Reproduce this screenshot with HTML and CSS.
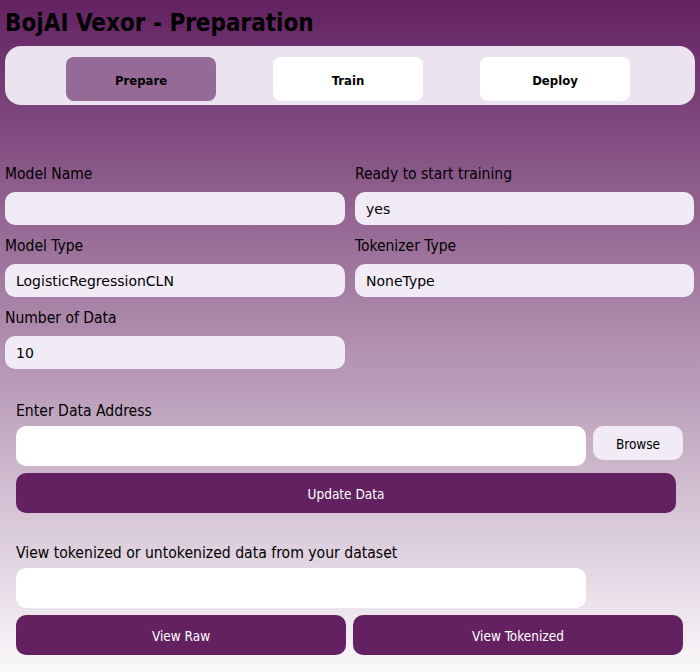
FILE: index.html
```html
<!DOCTYPE html>
<html>
<head>
<meta charset="utf-8">
<link rel="stylesheet" href="styles.css">
</head>
<body>
<div class="page">
  <h1 class="title">BojAI Vexor - Preparation</h1>
  <nav class="tabs">
    <div class="tab active">Prepare</div>
    <div class="tab">Train</div>
    <div class="tab">Deploy</div>
  </nav>
  <div class="info-grid">
    <div class="field">
      <div class="label">Model Name</div>
      <div class="value"></div>
    </div>
    <div class="field">
      <div class="label">Ready to start training</div>
      <div class="value">yes</div>
    </div>
    <div class="field">
      <div class="label">Model Type</div>
      <div class="value">LogisticRegressionCLN</div>
    </div>
    <div class="field">
      <div class="label">Tokenizer Type</div>
      <div class="value">NoneType</div>
    </div>
    <div class="field">
      <div class="label">Number of Data</div>
      <div class="value">10</div>
    </div>
  </div>
  <section class="data-section">
    <div class="section-label">Enter Data Address</div>
    <div class="row">
      <div class="text-input"></div>
      <div class="browse">Browse</div>
    </div>
    <div class="btn btn-update">Update Data</div>
  </section>
  <section class="view-section">
    <div class="section-label">View tokenized or untokenized data from your dataset</div>
    <div class="row">
      <div class="text-input"></div>
    </div>
    <div class="row">
      <div class="btn btn-half">View Raw</div>
      <div class="btn btn-half">View Tokenized</div>
    </div>
  </section>
</div>
</body>
</html>
```
FILE: styles.css
```css
* { box-sizing: border-box; }
html, body {
  margin: 0;
  padding: 0;
  height: 672px;
}
body {
  background: linear-gradient(to bottom, #632161 0px, #faf8fa 672px);
  font-family: "DejaVu Sans Condensed", "DejaVu Sans", sans-serif;
  color: #000;
}
.page {
  padding: 8px 5px 0 5px;
}
.title {
  margin: 0;
  font-size: 24px;
  line-height: 30px;
  font-weight: bold;
  font-family: "DejaVu Sans Condensed", "DejaVu Sans", sans-serif;
}
.tabs {
  margin-top: 8px;
  height: 59px;
  background: #ece3f0;
  border-radius: 16px;
  display: flex;
  justify-content: center;
  gap: 57px;
  padding-top: 11px;
  padding-right: 4px;
}
.tab {
  width: 150px;
  height: 44px;
  background: #ffffff;
  border-radius: 8px;
  display: flex;
  align-items: center;
  justify-content: center;
  font-weight: bold;
  font-size: 13px;
  padding-top: 3px;
}
.tab.active {
  background: #966a97;
}
.info-grid {
  margin-top: 58px;
  display: grid;
  grid-template-columns: 340px 339px;
  column-gap: 10px;
  row-gap: 10px;
}
.label {
  font-size: 15.5px;
  line-height: 20px;
  height: 20px;
  padding-top: 1px;
  margin-bottom: 9px;
}
.value {
  height: 33px;
  background: #f1ebf6;
  border-radius: 10px;
  padding-left: 11px;
  font-family: "DejaVu Sans", sans-serif;
  font-size: 14px;
  line-height: 35px;
}
.section-label {
  font-size: 15.6px;
  line-height: 20px;
  height: 20px;
  padding-top: 1px;
  margin-bottom: 6px;
}
.data-section {
  margin-top: 31px;
  padding-left: 11px;
}
.row {
  display: flex;
  gap: 7px;
  align-items: flex-start;
}
.text-input {
  width: 570px;
  height: 40px;
  background: #ffffff;
  border-radius: 10px;
}
.browse {
  width: 90px;
  height: 34px;
  background: #f1ebf6;
  border-radius: 10px;
  display: flex;
  align-items: center;
  justify-content: center;
  font-size: 13.5px;
  padding-top: 2px;
}
.btn {
  height: 40px;
  background: #632161;
  color: #ffffff;
  border-radius: 10px;
  display: flex;
  align-items: center;
  justify-content: center;
  font-size: 13.5px;
  padding-top: 1px;
}
.btn-update {
  width: 660px;
  margin-top: 7px;
}
.view-section {
  margin-top: 29px;
  padding-left: 11px;
}
.view-section .row + .row {
  margin-top: 7px;
}
.btn-half {
  width: 330px;
}
```
